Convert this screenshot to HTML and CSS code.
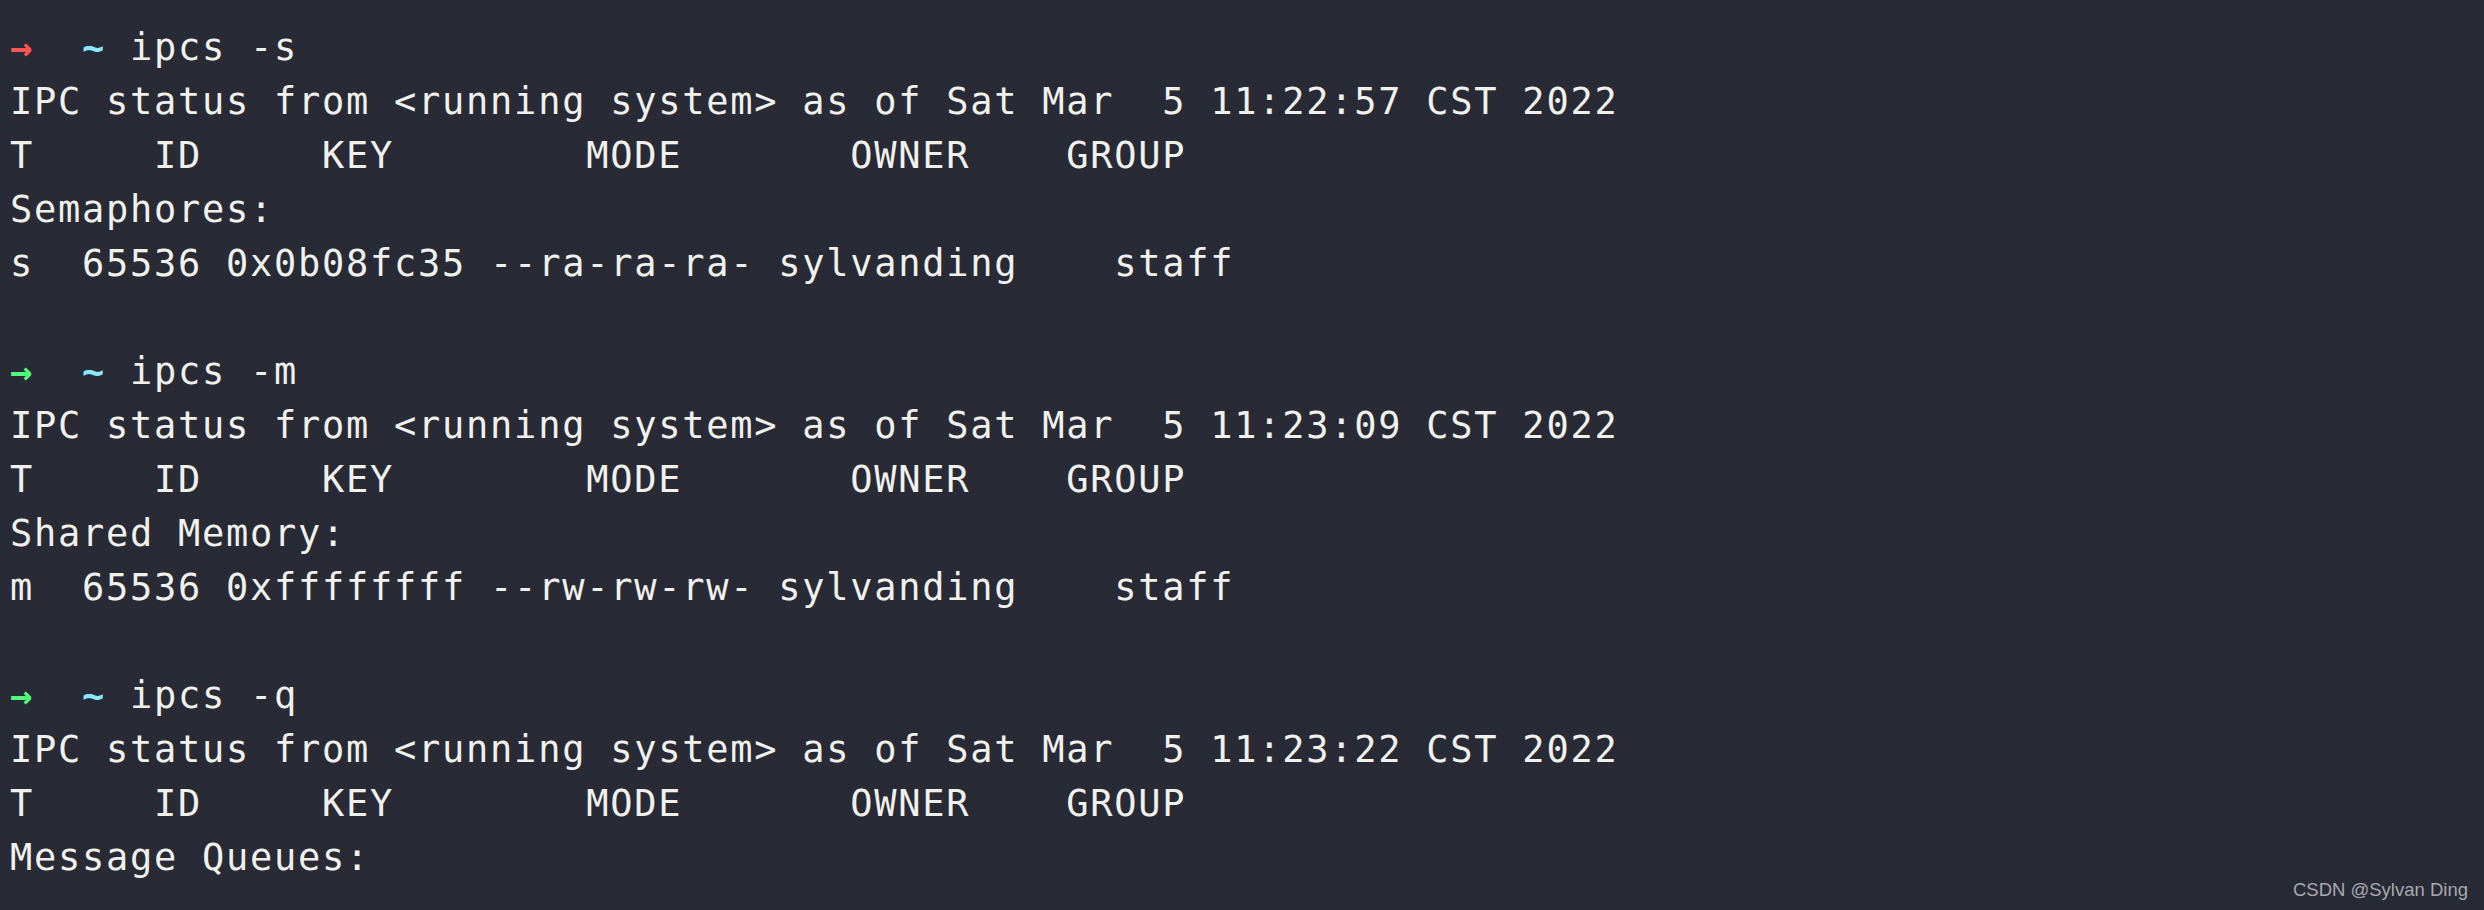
FILE: index.html
```html
<!DOCTYPE html>
<html>
<head>
<meta charset="utf-8">
<link rel="stylesheet" href="styles.css">
</head>
<body>
<div class="term">
<div class="line"><span class="arrow red">→</span>  <span class="tilde">~</span> ipcs -s</div>
<div class="line">IPC status from &lt;running system&gt; as of Sat Mar  5 11:22:57 CST 2022</div>
<div class="line">T     ID     KEY        MODE       OWNER    GROUP</div>
<div class="line">Semaphores:</div>
<div class="line">s  65536 0x0b08fc35 --ra-ra-ra- sylvanding    staff</div>
<div class="line"> </div>
<div class="line"><span class="arrow green">→</span>  <span class="tilde">~</span> ipcs -m</div>
<div class="line">IPC status from &lt;running system&gt; as of Sat Mar  5 11:23:09 CST 2022</div>
<div class="line">T     ID     KEY        MODE       OWNER    GROUP</div>
<div class="line">Shared Memory:</div>
<div class="line">m  65536 0xffffffff --rw-rw-rw- sylvanding    staff</div>
<div class="line"> </div>
<div class="line"><span class="arrow green">→</span>  <span class="tilde">~</span> ipcs -q</div>
<div class="line">IPC status from &lt;running system&gt; as of Sat Mar  5 11:23:22 CST 2022</div>
<div class="line">T     ID     KEY        MODE       OWNER    GROUP</div>
<div class="line">Message Queues:</div>
</div>
<div class="watermark">CSDN @Sylvan Ding</div>
</body>
</html>
```
FILE: styles.css
```css
html, body {
  margin: 0;
  padding: 0;
  background: #282a36;
  width: 2484px;
  height: 910px;
  overflow: hidden;
}
body {
  position: relative;
}
.term {
  padding: 21px 0 0 10px;
  font-family: "DejaVu Sans Mono", monospace;
  font-size: 37px;
  letter-spacing: 1.73px;
  line-height: 54px;
  color: #f1f1ec;
}
.line {
  white-space: pre;
  height: 54px;
}
.arrow {
  display: inline-block;
  width: 24px;
  font-weight: bold;
  letter-spacing: 0;
  overflow: visible;
}
.red { color: #ff5555; }
.green { color: #50fa7b; }
.tilde {
  color: #8be9fd;
  font-weight: bold;
}
.watermark {
  position: absolute;
  right: 16px;
  bottom: 9px;
  font-family: "Liberation Sans", Arial, sans-serif;
  font-size: 18.5px;
  color: #a8a9ae;
}
```
